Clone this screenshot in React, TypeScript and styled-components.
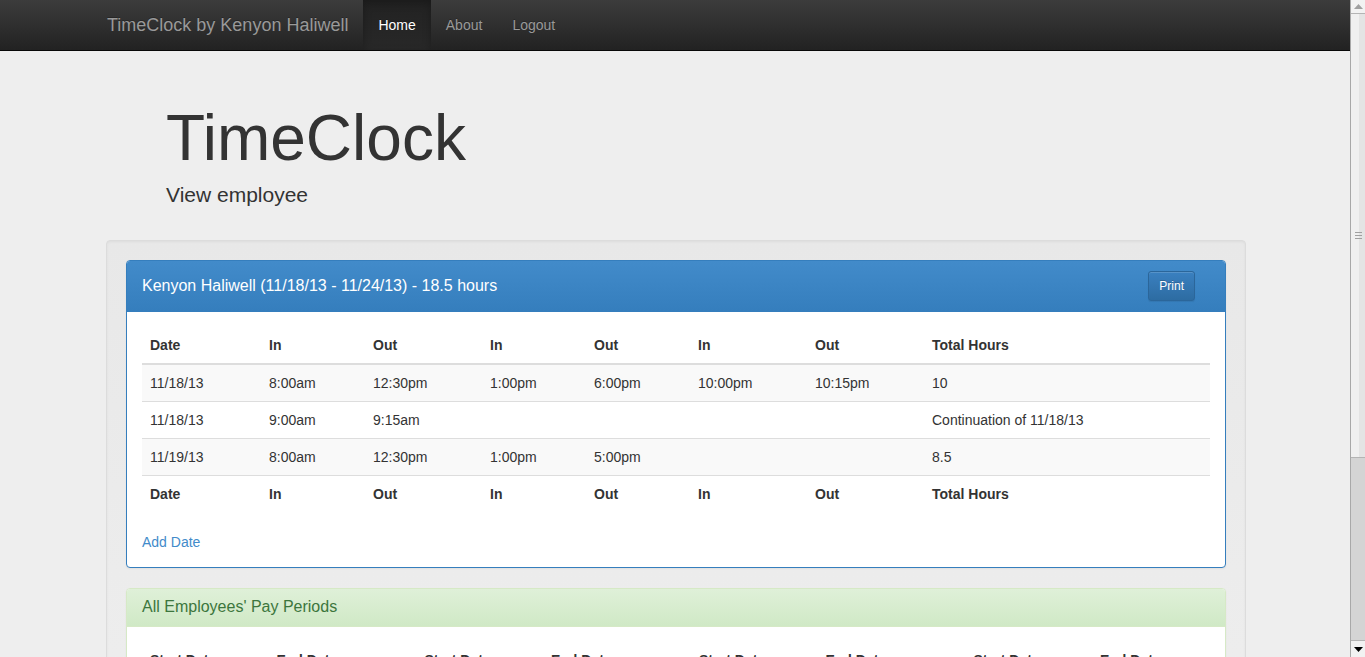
import React from "react";
import styled, { createGlobalStyle } from "styled-components";

const GlobalStyle = createGlobalStyle`
  html, body { margin: 0; padding: 0; }
  body {
    background: #eeeeee;
    font-family: "Liberation Sans", Arial, Helvetica, sans-serif;
    font-size: 14px;
    line-height: 20px;
    color: #333333;
  }
  * { box-sizing: border-box; }
`;

const Page = styled.div`
  padding: 0 15px 0 2px;
`;

const Navbar = styled.nav`
  height: 51px;
  margin-left: -2px;
  margin-right: -15px;
  padding-left: 2px;
  padding-right: 15px;
  background: linear-gradient(to bottom, #3c3c3c 0%, #222222 100%);
  border-bottom: 1px solid #080808;
`;

const NavInner = styled.div`
  width: 1140px;
  margin: 0 auto;
  display: flex;
  align-items: stretch;
  height: 50px;
`;

const Brand = styled.a`
  display: flex;
  align-items: center;
  padding: 0 15px 1px 1px;
  font-size: 18px;
  color: #999999;
  text-decoration: none;
  text-shadow: 0 -1px 0 rgba(0, 0, 0, 0.25);
`;

const NavList = styled.ul`
  display: flex;
  list-style: none;
  margin: 0;
  padding: 0;
`;

const NavItem = styled.li<{ $active?: boolean }>`
  display: flex;
  align-items: center;
  padding: 0 15px;
  font-size: 14px;
  color: ${(p) => (p.$active ? "#ffffff" : "#999999")};
  background: ${(p) =>
    p.$active ? "linear-gradient(to bottom, #222222 0%, #282828 100%)" : "transparent"};
  box-shadow: ${(p) => (p.$active ? "inset 0 3px 9px rgba(0,0,0,0.25)" : "none")};
  text-shadow: 0 -1px 0 rgba(0, 0, 0, 0.25);
`;

const Container = styled.main`
  width: 1140px;
  margin: 0 auto;
`;

const Jumbotron = styled.header`
  padding: 53px 60px 30px;
`;

const Title = styled.h1`
  margin: 0;
  font-size: 64px;
  line-height: 69px;
  font-weight: 400;
  color: #333333;
`;

const Lead = styled.p`
  margin: 7px 0 0;
  font-size: 21px;
  line-height: 30px;
  font-weight: 400;
`;

const Well = styled.section`
  padding: 19px;
  margin-bottom: 20px;
  background: linear-gradient(to bottom, #e8e8e8 0%, #f0f0f0 100%);
  border: 1px solid #dcdcdc;
  border-radius: 4px;
  box-shadow: inset 0 1px 3px rgba(0, 0, 0, 0.05), 0 1px 0 rgba(255, 255, 255, 0.1);
`;

const Panel = styled.div<{ $variant: "primary" | "success" }>`
  background: #ffffff;
  border: 1px solid ${(p) => (p.$variant === "primary" ? "#357ebd" : "#d6e9c6")};
  border-radius: 4px;
  margin-bottom: 20px;
  box-shadow: 0 1px 2px rgba(0, 0, 0, 0.05);
  overflow: hidden;
`;

const PanelHeading = styled.div<{ $variant: "primary" | "success" }>`
  display: flex;
  align-items: center;
  justify-content: space-between;
  padding: ${(p) => (p.$variant === "primary" ? "10px 30px 10px 15px" : "9px 15px 10px")};
  color: ${(p) => (p.$variant === "primary" ? "#ffffff" : "#3c763d")};
  background: ${(p) =>
    p.$variant === "primary"
      ? "linear-gradient(to bottom, #428bca 0%, #357ebd 100%)"
      : "linear-gradient(to bottom, #dff0d8 0%, #d0e9c6 100%)"};
  border-bottom: 1px solid ${(p) => (p.$variant === "primary" ? "#357ebd" : "#d6e9c6")};
`;

const PanelTitle = styled.h3`
  margin: 0;
  font-size: 16px;
  line-height: 18px;
  font-weight: 400;
`;

const PrintButton = styled.button`
  height: 30px;
  padding: 5px 10px;
  font-family: inherit;
  font-size: 12px;
  line-height: 18px;
  color: #ffffff;
  background: linear-gradient(to bottom, #3a80c0 0%, #2d6ca2 100%);
  border: 1px solid #2b669a;
  border-radius: 3px;
  text-shadow: 0 -1px 0 rgba(0, 0, 0, 0.2);
  box-shadow: inset 0 1px 0 rgba(255, 255, 255, 0.15), 0 1px 1px rgba(0, 0, 0, 0.075);
`;

const PanelBody = styled.div`
  padding: 15px;
`;

const Table = styled.table`
  width: 100%;
  border-collapse: collapse;
  border-spacing: 0;
  table-layout: fixed;
  margin-bottom: 20px;
`;

const Th = styled.th<{ $w?: number }>`
  width: ${(p) => (p.$w ? `${p.$w}px` : "auto")};
  padding: 8px;
  text-align: left;
  font-weight: 700;
  line-height: 20px;
  vertical-align: bottom;
`;

const HeadRow = styled.tr`
  border-bottom: 2px solid #dddddd;
`;

const BodyRow = styled.tr<{ $striped?: boolean }>`
  background: ${(p) => (p.$striped ? "#f9f9f9" : "transparent")};
  border-top: 1px solid #dddddd;
`;

const FootRow = styled.tr`
  border-top: 1px solid #dddddd;
`;

const Td = styled.td`
  padding: 8px;
  line-height: 20px;
  vertical-align: top;
`;

const Link = styled.a`
  color: #428bca;
  text-decoration: none;
  display: block;
`;

const PeriodGrid = styled.div`
  display: grid;
  grid-template-columns: repeat(4, 1fr);
  column-gap: 30px;
`;

const PeriodTable = styled.table`
  width: 100%;
  border-collapse: collapse;
  margin-bottom: 20px;
`;

const PeriodTh = styled.th`
  padding: 8px;
  text-align: left;
  font-weight: 700;
  line-height: 20px;
  border-bottom: 2px solid #dddddd;
`;

/* Fake browser scrollbar drawn over the right edge, as in the screenshot */
const Scrollbar = styled.div`
  position: fixed;
  top: 0;
  right: 0;
  width: 15px;
  height: 100vh;
  display: flex;
  flex-direction: column;
  background: #d4d4d4;
  border-left: 1px solid #a8a8a8;
`;

const ScrollButton = styled.div<{ $down?: boolean }>`
  height: ${(p) => (p.$down ? "17px" : "14px")};
  display: flex;
  align-items: center;
  justify-content: center;
  background: #f2f2f2;
  border-top: ${(p) => (p.$down ? "1px solid #b4b4b4" : "none")};
  border-bottom: ${(p) => (p.$down ? "none" : "1px solid #b4b4b4")};
`;

const Thumb = styled.div`
  height: 444px;
  display: flex;
  align-items: center;
  justify-content: center;
  background: linear-gradient(to right, #f0f0f0 0%, #f0f0f0 55%, #e4e4e4 55%, #e4e4e4 100%);
  border-bottom: 1px solid #b4b4b4;
`;

const Track = styled.div`
  flex: 1;
`;

const columns = [
  { label: "Date", w: 119 },
  { label: "In", w: 104 },
  { label: "Out", w: 117 },
  { label: "In", w: 104 },
  { label: "Out", w: 104 },
  { label: "In", w: 117 },
  { label: "Out", w: 117 },
  { label: "Total Hours", w: 0 },
];

const rows = [
  ["11/18/13", "8:00am", "12:30pm", "1:00pm", "6:00pm", "10:00pm", "10:15pm", "10"],
  ["11/18/13", "9:00am", "9:15am", "", "", "", "", "Continuation of 11/18/13"],
  ["11/19/13", "8:00am", "12:30pm", "1:00pm", "5:00pm", "", "", "8.5"],
];

const periods = [
  [
    ["11/18/13", "11/24/13"],
    ["11/11/13", "11/17/13"],
    ["11/04/13", "11/10/13"],
    ["10/28/13", "11/03/13"],
  ],
  [
    ["10/21/13", "10/27/13"],
    ["10/14/13", "10/20/13"],
    ["10/07/13", "10/13/13"],
    ["09/30/13", "10/06/13"],
  ],
  [
    ["09/23/13", "09/29/13"],
    ["09/16/13", "09/22/13"],
    ["09/09/13", "09/15/13"],
    ["09/02/13", "09/08/13"],
  ],
  [
    ["08/26/13", "09/01/13"],
    ["08/19/13", "08/25/13"],
    ["08/12/13", "08/18/13"],
  ],
];

export default function App() {
  return (
    <>
      <GlobalStyle />
      <Page>
        <Navbar>
          <NavInner>
            <Brand href="#">TimeClock by Kenyon Haliwell</Brand>
            <NavList>
              <NavItem $active>Home</NavItem>
              <NavItem>About</NavItem>
              <NavItem>Logout</NavItem>
            </NavList>
          </NavInner>
        </Navbar>
        <Container>
          <Jumbotron>
            <Title>TimeClock</Title>
            <Lead>View employee</Lead>
          </Jumbotron>
          <Well>
            <Panel $variant="primary">
              <PanelHeading $variant="primary">
                <PanelTitle>Kenyon Haliwell (11/18/13 - 11/24/13) - 18.5 hours</PanelTitle>
                <PrintButton>Print</PrintButton>
              </PanelHeading>
              <PanelBody>
                <Table>
                  <thead>
                    <HeadRow>
                      {columns.map((c, i) => (
                        <Th key={i} $w={c.w || undefined}>
                          {c.label}
                        </Th>
                      ))}
                    </HeadRow>
                  </thead>
                  <tbody>
                    {rows.map((r, i) => (
                      <BodyRow key={i} $striped={i % 2 === 0}>
                        {r.map((cell, j) => (
                          <Td key={j}>{cell}</Td>
                        ))}
                      </BodyRow>
                    ))}
                  </tbody>
                  <tfoot>
                    <FootRow>
                      {columns.map((c, i) => (
                        <Th key={i}>{c.label}</Th>
                      ))}
                    </FootRow>
                  </tfoot>
                </Table>
                <Link href="#">Add Date</Link>
              </PanelBody>
            </Panel>
            <Panel $variant="success">
              <PanelHeading $variant="success">
                <PanelTitle>All Employees' Pay Periods</PanelTitle>
              </PanelHeading>
              <PanelBody>
                <PeriodGrid>
                  {periods.map((group, g) => (
                    <PeriodTable key={g}>
                      <thead>
                        <tr>
                          <PeriodTh>Start Date</PeriodTh>
                          <PeriodTh>End Date</PeriodTh>
                        </tr>
                      </thead>
                      <tbody>
                        {group.map((p, i) => (
                          <BodyRow key={i} $striped={i % 2 === 0}>
                            <Td>
                              <Link href="#">{p[0]}</Link>
                            </Td>
                            <Td>{p[1]}</Td>
                          </BodyRow>
                        ))}
                      </tbody>
                    </PeriodTable>
                  ))}
                </PeriodGrid>
              </PanelBody>
            </Panel>
          </Well>
        </Container>
      </Page>
      <Scrollbar aria-hidden="true">
        <ScrollButton>
          <svg width="9" height="5" viewBox="0 0 9 5">
            <path d="M0 5 L4.5 0 L9 5 Z" fill="#a0a0a0" />
          </svg>
        </ScrollButton>
        <Thumb>
          <svg width="7" height="7" viewBox="0 0 7 7">
            <path d="M0 0.5 H7 M0 3.5 H7 M0 6.5 H7" stroke="#a0a0a0" strokeWidth="1" />
          </svg>
        </Thumb>
        <Track />
        <ScrollButton $down>
          <svg width="9" height="5" viewBox="0 0 9 5">
            <path d="M0 0 L4.5 5 L9 0 Z" fill="#000000" />
          </svg>
        </ScrollButton>
      </Scrollbar>
    </>
  );
}
